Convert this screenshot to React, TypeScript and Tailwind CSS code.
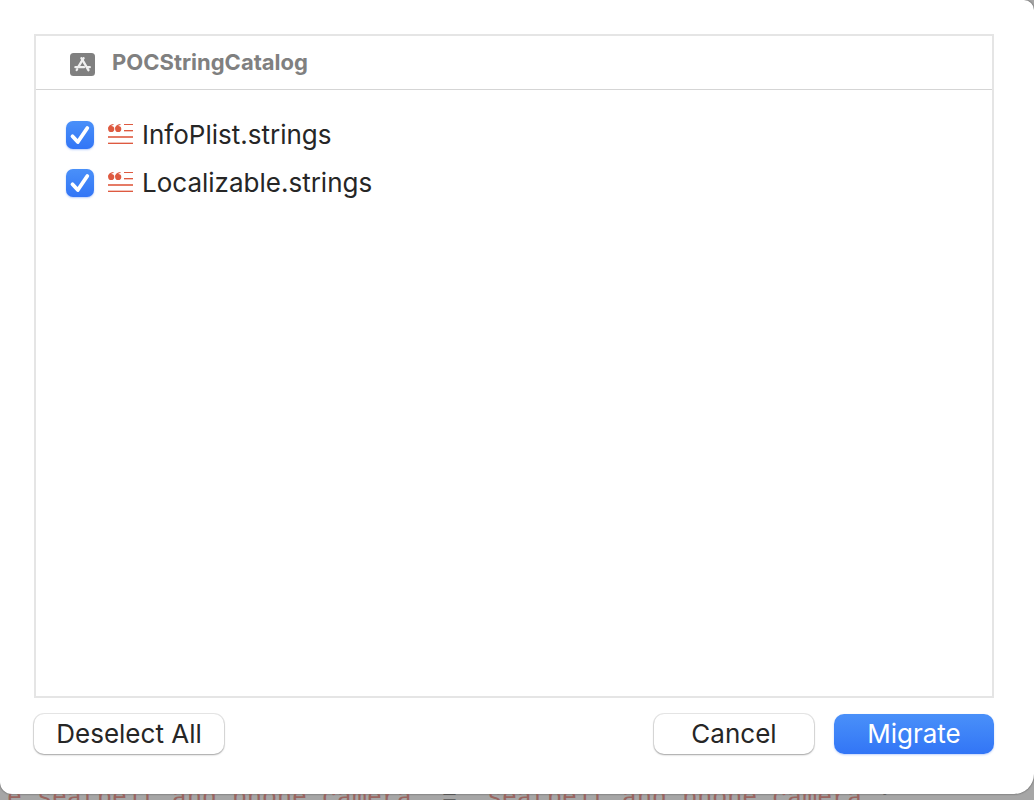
import { useState } from "react";

function AppStoreGlyph() {
  return (
    <svg viewBox="0 0 25 24" className="h-6 w-[25px] shrink-0" aria-hidden="true">
      <rect x="0" y="0" width="25" height="23" rx="3.5" fill="#808080" />
      <g stroke="#fff" strokeWidth="2.3" strokeLinecap="round" fill="none" opacity="0.88">
        <path d="M11.4 5.2 L18.4 17.2" />
        <path d="M13.6 5.2 L8.6 13.4" />
        <path d="M5.4 14.2 H14" />
        <path d="M17.4 14.2 H19.8" />
        <path d="M7.2 16.2 L6.7 17" />
      </g>
    </svg>
  );
}

function StringsGlyph() {
  return (
    <svg viewBox="0 0 26 22" className="h-[22px] w-[26px] shrink-0" aria-hidden="true">
      <g fill="#de5a40">
        <circle cx="3.2" cy="5" r="3.1" />
        <circle cx="10.2" cy="5" r="3.1" />
        <path d="M0.1 5 C0.1 2 2 0.2 5.4 0 L5.6 1 C3.8 1.3 2.7 2.1 2.6 3.4 Z" />
        <path d="M7.1 5 C7.1 2 9 0.2 12.4 0 L12.6 1 C10.8 1.3 9.7 2.1 9.6 3.4 Z" />
        <rect x="16" y="0" width="9" height="1" />
        <rect x="16" y="6" width="9" height="1" />
        <rect x="0" y="12" width="25" height="2" opacity="0.8" />
        <rect x="0" y="19" width="25" height="1" />
      </g>
      <g fill="#de5a40" opacity="0.35">
        <rect x="16" y="7" width="9" height="1" />
        <rect x="0" y="18" width="25" height="1" />
      </g>
    </svg>
  );
}

function FileRow({ name }: { name: string }) {
  const [checked, setChecked] = useState(true);
  return (
    <li>
      <label className="flex h-12 items-center">
        <span className="grid h-7 w-7 shrink-0">
          <input
            type="checkbox"
            checked={checked}
            onChange={(e) => setChecked(e.target.checked)}
            className="peer col-start-1 row-start-1 h-7 w-7 appearance-none rounded-[7px] border border-gray-300 bg-white shadow-[0_1px_2px_rgba(50,110,240,0.35)] checked:border-0 checked:bg-linear-to-b checked:from-[#4a90f9] checked:to-[#3275f6]"
          />
          <svg
            viewBox="0 0 28 28"
            className="pointer-events-none invisible col-start-1 row-start-1 h-7 w-7 peer-checked:visible"
            aria-hidden="true"
          >
            <path
              d="M6.5 15.3 L11.8 21 L21.3 7"
              fill="none"
              stroke="#fff"
              strokeWidth="3.8"
              strokeLinecap="round"
              strokeLinejoin="round"
            />
          </svg>
        </span>
        <span className="ml-3.5 mr-2">
          <StringsGlyph />
        </span>
        <span className="pb-0.5">{name}</span>
      </label>
    </li>
  );
}

const plainButton =
  "h-10 rounded-[10px] bg-white pb-1 shadow-[0_0_0_1px_rgba(0,0,0,0.09),0_1px_2px_rgba(0,0,0,0.3)]";

export default function App() {
  return (
    <div className="flex h-screen flex-col overflow-hidden bg-[#a6a6a6] font-['Inter','Liberation_Sans',sans-serif] text-[26px] text-[#262626]">
      <main className="flex min-h-0 flex-1 flex-col rounded-tr-[10px] rounded-br-[20px] rounded-bl-[12px] bg-white px-[34px] pt-[34px] pb-10 pr-10 shadow-[0_0_2px_rgba(0,0,0,0.6)]">
        <section className="flex min-h-0 flex-1 flex-col border-2 border-[#e5e5e5]">
          <h1 className="flex h-[54px] shrink-0 items-center gap-[17px] border-b border-[#d5d5d5] pl-[34px] text-[22px] font-bold text-[#808080]">
            <span className="pt-1">
              <AppStoreGlyph />
            </span>
            POCStringCatalog
          </h1>
          <ul className="pt-[21px] pl-[30px]">
            <FileRow name="InfoPlist.strings" />
            <FileRow name="Localizable.strings" />
          </ul>
        </section>
        <footer className="mt-4 flex shrink-0 items-center gap-5">
          <button type="button" className={`${plainButton} mr-auto w-[190px]`}>
            Deselect All
          </button>
          <button type="button" className={`${plainButton} w-40`}>
            Cancel
          </button>
          <button
            type="button"
            className="h-10 w-40 rounded-[10px] bg-linear-to-b from-[#4a90f9] to-[#3275f6] pb-1 text-white shadow-[0_1px_2px_rgba(50,110,240,0.3)]"
          >
            Migrate
          </button>
        </footer>
      </main>
      <div className="h-1.5 shrink-0 overflow-hidden">
        <code className="-mt-[11px] -ml-2 block whitespace-pre font-['Liberation_Mono',monospace] text-[25px] leading-8 text-[#996560]">
          {"re seatbelt and phone camera\""}
          <span className="text-[#555]"> = </span>
          {"\"seatbelt and phone camera\""}
          <span className="text-[#555]">;</span>
        </code>
      </div>
    </div>
  );
}
